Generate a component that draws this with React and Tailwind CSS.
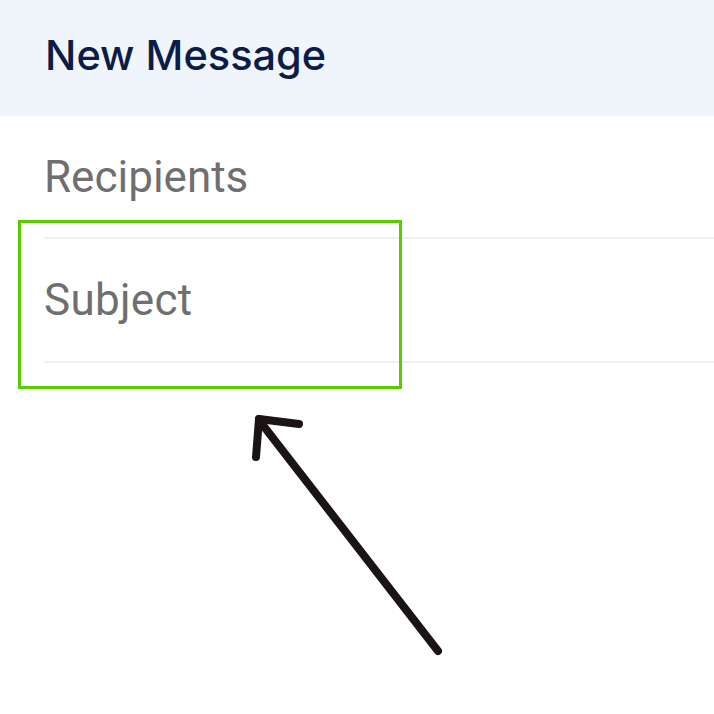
export default function App() {
  return (
    <div className="relative w-[714px] h-[714px] bg-white overflow-hidden" style={{ fontFamily: "Roboto, 'Noto Sans', sans-serif" }}>
      <div className="h-[116px] bg-[#f0f4fb] flex items-center pl-[45px] pb-[4px]">
        <h1 className="text-[41.5px] font-medium text-[#0b1d47] leading-none" style={{ fontFamily: "Inter, Roboto, sans-serif" }}>New Message</h1>
      </div>
      <div className="pl-[44px]">
        <div className="h-[123px] flex items-center border-b-2 border-[#eeeff1]">
          <span className="text-[44px] text-[#6f6f6f] leading-none">Recipients</span>
        </div>
        <div className="h-[124px] flex items-center border-b-2 border-[#eeeff1]">
          <span className="text-[44px] text-[#6f6f6f] leading-none tracking-[0.3px]">Subject</span>
        </div>
      </div>
      <div className="absolute left-[18px] top-[220px] w-[384px] h-[169px] border-[3px] border-[#5ccc00]" />
      <svg className="absolute left-0 top-0" width="714" height="714" viewBox="0 0 714 714">
        <g stroke="#1a1414" strokeWidth="8" strokeLinecap="round" fill="none">
          <line x1="438" y1="651" x2="262" y2="424" />
          <line x1="259" y1="419" x2="299" y2="424" />
          <line x1="259" y1="419" x2="256" y2="457" />
        </g>
      </svg>
    </div>
  );
}
